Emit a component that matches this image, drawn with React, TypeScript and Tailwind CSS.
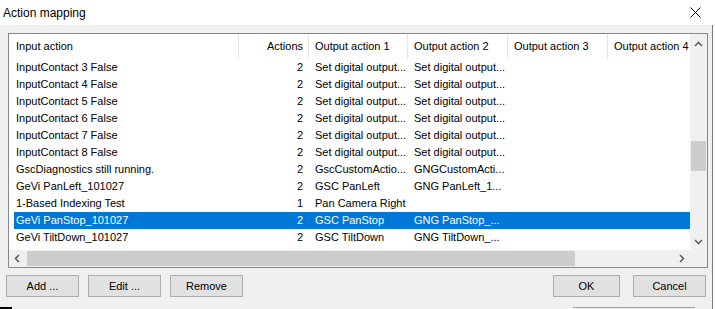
import React from "react";

type Row = {
  input: string;
  count: string;
  out1: string;
  out2: string;
  selected?: boolean;
};

const rows: Row[] = [
  { input: "InputContact 3 False", count: "2", out1: "Set digital output...", out2: "Set digital output..." },
  { input: "InputContact 4 False", count: "2", out1: "Set digital output...", out2: "Set digital output..." },
  { input: "InputContact 5 False", count: "2", out1: "Set digital output...", out2: "Set digital output..." },
  { input: "InputContact 6 False", count: "2", out1: "Set digital output...", out2: "Set digital output..." },
  { input: "InputContact 7 False", count: "2", out1: "Set digital output...", out2: "Set digital output..." },
  { input: "InputContact 8 False", count: "2", out1: "Set digital output...", out2: "Set digital output..." },
  { input: "GscDiagnostics still running.", count: "2", out1: "GscCustomActio...", out2: "GNGCustomActi..." },
  { input: "GeVi PanLeft_101027", count: "2", out1: "GSC PanLeft", out2: "GNG PanLeft_1..." },
  { input: "1-Based Indexing Test", count: "1", out1: "Pan Camera Right", out2: "" },
  { input: "GeVi PanStop_101027", count: "2", out1: "GSC PanStop", out2: "GNG PanStop_...", selected: true },
  { input: "GeVi TiltDown_101027", count: "2", out1: "GSC TiltDown", out2: "GNG TiltDown_..." },
];

function Chevron({ dir }: { dir: "up" | "down" | "left" | "right" }) {
  const pts = {
    up: "1,6 4.5,2.5 8,6",
    down: "1,3 4.5,6.5 8,3",
    left: "6,1 2.5,4.5 6,8",
    right: "3,1 6.5,4.5 3,8",
  }[dir];
  return (
    <svg width="9" height="9" viewBox="0 0 9 9">
      <polyline points={pts} fill="none" stroke="#606060" strokeWidth="1.6" />
    </svg>
  );
}

function Button({ label, w }: { label: string; w: string }) {
  return (
    <button
      className={`${w} h-[22px] border border-[#adadad] bg-[#e1e1e1] text-[11px] text-black`}
    >
      {label}
    </button>
  );
}

export default function App() {
  return (
    <div className="flex h-[309px] w-[715px] flex-col bg-white font-['Liberation_Sans',Arial,sans-serif] text-black">
      {/* Title bar */}
      <div className="flex h-[25px] w-[713px] shrink-0 items-center justify-between bg-white pl-[3px] pr-[12px]">
        <span className="text-[12px]">Action mapping</span>
        <svg width="11" height="11" viewBox="0 0 11 11">
          <path d="M0.5 0.5 L10.5 10.5 M10.5 0.5 L0.5 10.5" stroke="#000" strokeWidth="1" />
        </svg>
      </div>

      {/* Dialog body */}
      <div className="flex w-[713px] flex-1 flex-col border-r border-[#7a7a7a] bg-[#f0f0f0]">
        {/* List view */}
        <div className="ml-[8px] mt-[8px] flex h-[235px] w-[700px] flex-col border border-[#828790] bg-white">
          <div className="flex h-[216px]">
            {/* Content */}
            <div className="w-[681px] overflow-hidden pl-[5px] text-[11px]">
              <div className="flex h-[25px] w-[694px] items-center whitespace-nowrap">
                <div className="flex h-full w-[225px] shrink-0 items-center border-r border-[#e5e5e5] pl-[2px]">Input action</div>
                <div className="flex h-full w-[70px] shrink-0 items-center justify-end border-r border-[#e5e5e5] pr-[5px]">Actions</div>
                <div className="flex h-full w-[99px] shrink-0 items-center border-r border-[#e5e5e5] pl-[6px]">Output action 1</div>
                <div className="flex h-full w-[100px] shrink-0 items-center border-r border-[#e5e5e5] pl-[6px]">Output action 2</div>
                <div className="flex h-full w-[100px] shrink-0 items-center border-r border-[#e5e5e5] pl-[6px]">Output action 3</div>
                <div className="flex h-full w-[100px] shrink-0 items-center pl-[6px]">Output action 4</div>
              </div>
              {rows.map((r) => (
                <div
                  key={r.input}
                  className={`flex h-[17px] w-[694px] items-center whitespace-nowrap ${r.selected ? "bg-[#0078d7] text-white" : ""}`}
                >
                  <div className="w-[225px] shrink-0 overflow-hidden pl-[2px]">{r.input}</div>
                  <div className="w-[70px] shrink-0 pr-[6px] text-right">{r.count}</div>
                  <div className="w-[99px] shrink-0 overflow-hidden pl-[6px]">{r.out1}</div>
                  <div className="w-[100px] shrink-0 overflow-hidden pl-[6px]">{r.out2}</div>
                  <div className="w-[100px] shrink-0" />
                  <div className="w-[100px] shrink-0" />
                </div>
              ))}
            </div>
            {/* Vertical scrollbar */}
            <div className="flex w-[17px] flex-col bg-[#f0f0f0]">
              <div className="flex h-[17px] items-end justify-center pb-[2px]">
                <Chevron dir="up" />
              </div>
              <div className="flex-1">
                <div className="mx-[1px] mt-[90px] h-[30px] bg-[#cdcdcd]" />
              </div>
              <div className="flex h-[17px] items-center justify-center">
                <Chevron dir="down" />
              </div>
            </div>
          </div>
          {/* Horizontal scrollbar */}
          <div className="flex h-[17px]">
            <div className="flex w-[681px] bg-[#f0f0f0]">
              <div className="flex w-[17px] items-center justify-center">
                <Chevron dir="left" />
              </div>
              <div className="my-[1px] ml-[1px] w-[548px] bg-[#cdcdcd]" />
              <div className="flex-1" />
              <div className="flex w-[17px] items-center justify-center">
                <Chevron dir="right" />
              </div>
            </div>
            <div className="w-[17px] bg-[#f0f0f0]" />
          </div>
        </div>

        {/* Buttons */}
        <div className="mt-[7px] flex pl-[6px] pr-[6px]">
          <div className="flex gap-[9px]">
            <Button label="Add ..." w="w-[73px]" />
            <Button label="Edit ..." w="w-[73px]" />
            <Button label="Remove" w="w-[73px]" />
          </div>
          <div className="ml-auto flex gap-[13px]">
            <Button label="OK" w="w-[67px]" />
            <Button label="Cancel" w="w-[73px]" />
          </div>
        </div>

        {/* Edge of the window behind */}
        <div className="mt-auto flex h-[2px]">
          <div className="w-[12px] bg-black" />
          <div className="w-[561px]" />
          <div className="w-[122px] border-t border-[#a0a0a0]" />
        </div>
      </div>
    </div>
  );
}
